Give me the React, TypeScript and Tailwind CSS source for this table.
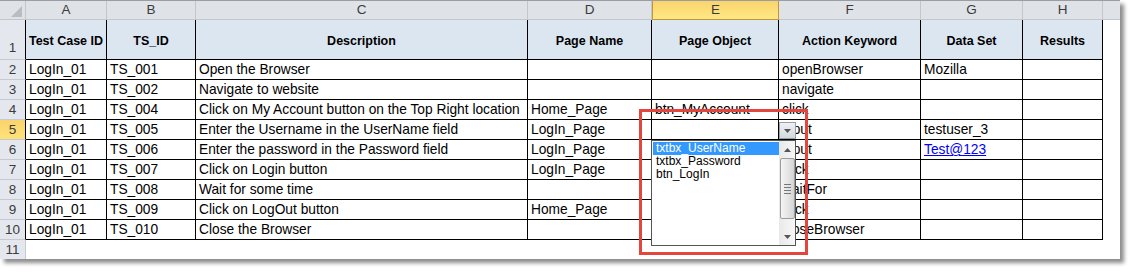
import React from 'react';

type Row = string[];

const colW = [
  'w-[81px]',
  'w-[89px]',
  'w-[332px]',
  'w-[124px]',
  'w-[127px]',
  'w-[142px]',
  'w-[102px]',
  'w-[80px]',
];

const letters = ['A', 'B', 'C', 'D', 'E', 'F', 'G', 'H'];

const headers = [
  'Test Case ID',
  'TS_ID',
  'Description',
  'Page Name',
  'Page Object',
  'Action Keyword',
  'Data Set',
  'Results',
];

const rows: Row[] = [
  ['LogIn_01', 'TS_001', 'Open the Browser', '', '', 'openBrowser', 'Mozilla', ''],
  ['LogIn_01', 'TS_002', 'Navigate to website', '', '', 'navigate', '', ''],
  ['LogIn_01', 'TS_004', 'Click on My Account button on the Top Right location', 'Home_Page', 'btn_MyAccount', 'click', '', ''],
  ['LogIn_01', 'TS_005', 'Enter the Username in the UserName field', 'LogIn_Page', '', 'input', 'testuser_3', ''],
  ['LogIn_01', 'TS_006', 'Enter the password in the Password field', 'LogIn_Page', '', 'input', 'Test@123', ''],
  ['LogIn_01', 'TS_007', 'Click on Login button', 'LogIn_Page', '', 'click', '', ''],
  ['LogIn_01', 'TS_008', 'Wait for some time', '', '', 'waitFor', '', ''],
  ['LogIn_01', 'TS_009', 'Click on LogOut button', 'Home_Page', '', 'click', '', ''],
  ['LogIn_01', 'TS_010', 'Close the Browser', '', '', 'closeBrowser', '', ''],
];

const options = ['txtbx_UserName', 'txtbx_Password', 'btn_LogIn'];

const Arrow: React.FC<{ up?: boolean }> = ({ up }) => (
  <svg width="7" height="4" viewBox="0 0 7 4">
    <path d={up ? 'M0 4 L3.5 0 L7 4 Z' : 'M0 0 L7 0 L3.5 4 Z'} fill="#555" />
  </svg>
);

// the open data-validation list on cell E5, plus the red callout box
const Dropdown: React.FC = () => (
  <>
    {/* dropdown button next to the cell */}
    <div className="absolute left-[779px] top-[122px] w-[17px] h-[17px] border border-[#98a0aa] bg-gradient-to-b from-[#eef0f3] to-[#d5d9de] flex items-center justify-center">
      <Arrow />
    </div>

    {/* list box */}
    <div className="absolute left-[651px] top-[140px] w-[145px] h-[106px] bg-white border border-[#555] flex">
      <div className="flex-1 pt-[1px] pl-[1px]">
        {options.map((o, i) => (
          <div
            key={o}
            className={`h-[13px] leading-[13px] pl-[3px] text-[12px] ${
              i === 0 ? 'bg-[#3399ff] text-white' : 'text-black'
            }`}
          >
            {o}
          </div>
        ))}
      </div>
      {/* scrollbar */}
      <div className="w-[16px] h-full bg-gradient-to-r from-[#e9e9e9] to-[#f7f7f7] flex flex-col items-center">
        <div className="h-[17px] flex items-center justify-center">
          <Arrow up />
        </div>
        <div className="w-[15px] h-[61px] rounded-[2px] border border-[#9c9c9c] bg-gradient-to-r from-[#f4f4f4] via-[#e6e6e6] to-[#d4d4d4] flex flex-col items-center justify-center gap-[2px]">
          <div className="w-[7px] h-px bg-[#777]" />
          <div className="w-[7px] h-px bg-[#777]" />
          <div className="w-[7px] h-px bg-[#777]" />
          <div className="w-[7px] h-px bg-[#777]" />
        </div>
        <div className="flex-1" />
        <div className="h-[17px] flex items-center justify-center">
          <Arrow />
        </div>
      </div>
    </div>

    <div className="absolute left-[639px] top-[109px] w-[169px] h-[146px] border-[3px] border-[#e4453c]" />
  </>
);

export default function App() {
  return (
    <div className="w-[1135px] h-[274px] bg-white font-['Liberation_Sans',Arial,sans-serif]">
      <div className="relative w-[1120px] h-[259px] bg-white shadow-[4px_4px_4px_rgba(0,0,0,0.45)]">
        {/* column letters */}
        <div className="flex h-[20px] border-t border-[#9a9da1] bg-[#dfe3e8] text-[13.5px] text-[#3b3b3b]">
          <div className="w-[26px] h-full border-r border-b border-[#c3c7cc] flex items-end justify-end pr-[3px] pb-[2px]">
            <svg width="11" height="11" viewBox="0 0 11 11">
              <path d="M11 0 L11 11 L0 11 Z" fill="#b9bdc2" />
            </svg>
          </div>
          {letters.map((l, i) => (
            <div
              key={l}
              className={`${colW[i]} h-full flex items-center justify-center ${
                l === 'E'
                  ? 'bg-gradient-to-b from-[#f9d36e] to-[#ffe984] border-x border-[#c39539] border-b'
                  : 'border-r border-b border-[#c3c7cc]'
              }`}
            >
              {l}
            </div>
          ))}
          <div className="flex-1 h-full border-b border-[#c3c7cc]" />
        </div>

        {/* header row 1 */}
        <div className="flex h-[40px] text-[12.5px]">
          <div className="w-[26px] h-full bg-[#e4e8ee] border-r border-black border-b-[1px] border-b-[#c5cad1] flex items-end justify-center pb-[1px] text-[13.5px] text-[#3b3b3b]">
            1
          </div>
          {headers.map((h, i) => (
            <div
              key={h}
              className={`${colW[i]} h-full bg-[#dce6f1] border-r border-b border-black flex items-center justify-center pt-[3px] font-bold text-black`}
            >
              {h}
            </div>
          ))}
          <div className="flex-1" />
        </div>

        {/* data rows */}
        {rows.map((r, ri) => {
          const n = ri + 2;
          return (
            <div key={n} className="flex h-[20px] text-[13.75px]">
              <div
                className={`w-[26px] h-full border-r border-black border-b-[1px] border-b-[#c5cad1] flex items-center justify-center pt-[2px] text-[13.5px] text-[#3b3b3b] ${
                  n === 5 ? 'bg-gradient-to-b from-[#f9d36e] to-[#ffe27a]' : 'bg-[#e4e8ee]'
                }`}
              >
                {n}
              </div>
              {r.map((c, ci) => (
                <div
                  key={ci}
                  className={`${colW[ci]} h-full border-r border-b border-black flex items-center pl-[3px] pt-[2px] whitespace-nowrap overflow-hidden ${
                    c === 'Test@123' ? 'text-[#0000ff] underline' : 'text-black'
                  }`}
                >
                  {c}
                </div>
              ))}
              <div className="flex-1" />
            </div>
          );
        })}

        {/* row 11 */}
        <div className="flex h-[19px]">
          <div className="w-[26px] h-full bg-[#e4e8ee] border-r border-[#c5cad1] flex items-center justify-center pt-[1px] text-[13.5px] text-[#3b3b3b]">
            11
          </div>
          <div className="flex-1" />
        </div>

        <Dropdown />
      </div>
    </div>
  );
}
